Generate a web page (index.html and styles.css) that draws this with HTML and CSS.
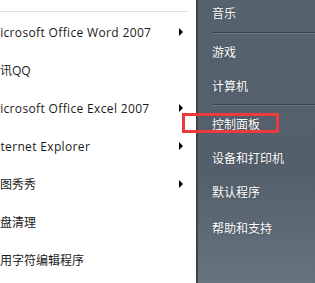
FILE: index.html
```html
<!DOCTYPE html>
<html lang="zh-CN">
  <head>
    <meta charset="UTF-8" />
    <meta name="viewport" content="width=device-width, initial-scale=1.0" />
    <title>开始菜单</title>
    <link rel="stylesheet" href="styles.css">
  </head>
  <body>
    <div id="menu">
      <div id="programs">
        <div class="top-line"></div>
        <div class="item"><span class="label en">Microsoft Office Word 2007</span><span class="arrow"></span></div>
        <div class="item"><span class="label">腾讯QQ</span></div>
        <div class="item"><span class="label en">Microsoft Office Excel 2007</span><span class="arrow"></span></div>
        <div class="item"><span class="label en">Internet Explorer</span><span class="arrow"></span></div>
        <div class="item"><span class="label">美图秀秀</span><span class="arrow"></span></div>
        <div class="item"><span class="label">磁盘清理</span></div>
        <div class="item"><span class="label">专用字符编辑程序</span></div>
      </div>
      <div id="places">
        <div class="link first">音乐</div>
        <div class="sep"></div>
        <div class="link">游戏</div>
        <div class="link short">计算机</div>
        <div class="sep sep2"></div>
        <div class="link">控制面板</div>
        <div class="link">设备和打印机</div>
        <div class="link">默认程序</div>
        <div class="link last">帮助和支持</div>
      </div>
    </div>
    <div id="highlight"></div>
  </body>
</html>
```

FILE: styles.css
```css
body {
  margin: 0;
  width: 315px;
  height: 283px;
  overflow: hidden;
  position: relative;
  font-family: "Segoe UI", "Open Sans", "Noto Sans CJK SC", sans-serif;
  font-size: 12px;
}
#menu {
  display: flex;
  height: 283px;
}
#programs {
  width: 196px;
  background: #ffffff;
  overflow: hidden;
}
.top-line {
  width: 188px;
  height: 1px;
  margin-top: 11px;
  margin-bottom: 1px;
  background: #d8e1ea;
}
.item {
  height: 38px;
  display: flex;
  align-items: center;
  justify-content: space-between;
  padding-right: 13px;
  color: #1a1a1a;
}
.label {
  margin-left: -12px;
  white-space: nowrap;
}
.label.en {
  margin-left: -11px;
  letter-spacing: 0.35px;
}
.arrow {
  width: 0;
  height: 0;
  border-top: 4px solid transparent;
  border-bottom: 4px solid transparent;
  border-left: 4px solid #000000;
}
#places {
  flex: 1;
  border-left: 2px solid #3b444d;
  background: linear-gradient(to bottom, #56636f, #535f6b 60%, #66747f);
  padding-left: 14px;
  color: #ffffff;
}
.link {
  height: 34px;
  display: flex;
  align-items: center;
  text-shadow: 0 0 2px rgba(0, 0, 0, 0.35);
}
.link.first {
  height: 26px;
}
.link.short {
  height: 33px;
}
.link.last {
  height: 38px;
}
.sep {
  height: 1px;
  margin: 6px 0 1px;
  background: #3a434c;
  border-bottom: 1px solid #6b7884;
}
.sep2 {
  margin-top: 2px;
}
#highlight {
  position: absolute;
  left: 182px;
  top: 113px;
  width: 91px;
  height: 14px;
  border: 3px solid #ec3a3f;
}
```
